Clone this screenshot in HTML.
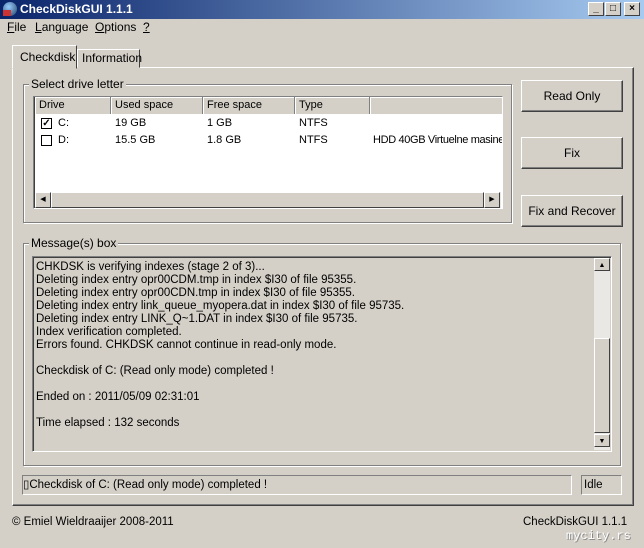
<!DOCTYPE html>
<html><head><style>
*{margin:0;padding:0;box-sizing:border-box}
body{width:644px;height:548px;background:#d4d0c8;font-family:"Liberation Sans",sans-serif;font-size:11px;color:#000;position:relative;overflow:hidden}
.a{position:absolute}
.title{left:0;top:0;width:644px;height:19px;background:linear-gradient(90deg,#0a246a,#a6caf0);color:#fff;font-weight:bold;font-size:12px;line-height:19px;padding-left:20px}
.wb{top:2px;width:16px;height:14px;background:#d4d0c8;border:1px solid;border-color:#fff #404040 #404040 #fff;font-size:10px;line-height:12px;text-align:center;color:#000;font-weight:bold}
.sunk{border:1px solid;border-color:#808080 #fff #fff #808080;box-shadow:inset 1px 1px #404040}
.grp{border:1px solid #808080;box-shadow:1px 1px #fff, inset 1px 1px #fff}
.lbl{background:#d4d0c8;padding:0 2px}
.btn{background:#d4d0c8;border:1px solid;border-color:#fff #404040 #404040 #fff;box-shadow:inset -1px -1px #808080;text-align:center;font-size:12px}
.hd{top:0;height:17px;border-right:1px solid #808080;box-shadow:inset 1px 1px #fff;padding-left:4px;line-height:16px}
.cb{width:11px;height:11px;border:1px solid #000;background:#fff;font-size:10px;line-height:9px;text-align:center;font-weight:bold}
.sb{width:16px;height:16px;background:#d4d0c8;border:1px solid;border-color:#fff #404040 #404040 #fff;font-size:7px;line-height:14px;text-align:center}
.msg div{height:13px;line-height:13px}
.m{top:20px;font-size:12px}
</style></head><body>
<div class="a title">CheckDiskGUI 1.1.1</div>
<div class="a" style="left:3px;top:2px;width:14px;height:14px;border-radius:50%;background:radial-gradient(circle at 40% 35%,#9cf,#246);"></div>
<div class="a" style="left:3px;top:10px;width:8px;height:6px;background:#c33"></div>
<div class="a wb" style="left:588px">_</div>
<div class="a wb" style="left:605px">□</div>
<div class="a wb" style="left:624px">×</div>
<div class="a m" style="left:7px"><u>F</u>ile</div>
<div class="a m" style="left:35px"><u>L</u>anguage</div>
<div class="a m" style="left:95px"><u>O</u>ptions</div>
<div class="a m" style="left:143px"><u>?</u></div>
<div class="a" style="left:12px;top:67px;width:622px;height:439px;border:1px solid;border-color:#fff #404040 #404040 #fff;box-shadow:inset -1px -1px #808080"></div>
<div class="a" style="left:77px;top:49px;width:63px;height:19px;border:1px solid;border-color:#fff #404040 #d4d0c8 #fff;padding:1px 0 0 4px;font-size:12px">Information</div>
<div class="a" style="left:12px;top:45px;width:65px;height:24px;background:#d4d0c8;border:1px solid;border-color:#fff #404040 #d4d0c8 #fff;padding:4px 0 0 7px;font-size:12px">Checkdisk</div>

<div class="a grp" style="left:23px;top:84px;width:489px;height:139px"></div>
<div class="a lbl" style="left:29px;top:77px;font-size:12px">Select drive letter</div>
<div class="a sunk" style="left:33px;top:96px;width:470px;height:113px;background:#fff;overflow:hidden">
 <div class="a hd" style="left:1px;width:76px;background:#d4d0c8">Drive</div>
 <div class="a hd" style="left:77px;width:92px;background:#d4d0c8">Used space</div>
 <div class="a hd" style="left:169px;width:92px;background:#d4d0c8">Free space</div>
 <div class="a hd" style="left:261px;width:75px;background:#d4d0c8">Type</div>
 <div class="a hd" style="left:336px;width:132px;background:#d4d0c8;border-right:none"></div>
 <div class="a cb" style="left:7px;top:21px">✓</div><div class="a" style="left:24px;top:20px">C:</div>
 <div class="a" style="left:81px;top:20px">19 GB</div><div class="a" style="left:173px;top:20px">1 GB</div><div class="a" style="left:265px;top:20px">NTFS</div>
 <div class="a cb" style="left:7px;top:38px"></div><div class="a" style="left:24px;top:37px">D:</div>
 <div class="a" style="left:81px;top:37px">15.5 GB</div><div class="a" style="left:173px;top:37px">1.8 GB</div><div class="a" style="left:265px;top:37px">NTFS</div><div class="a" style="left:339px;top:37px;white-space:nowrap;letter-spacing:-0.35px">HDD 40GB Virtuelne masine</div>
 <div class="a" style="left:1px;top:95px;width:466px;height:16px;background:#eae8e4"></div>
 <div class="a sb" style="left:1px;top:95px">◀</div>
 <div class="a" style="left:17px;top:95px;width:433px;height:16px;background:#d4d0c8;border:1px solid;border-color:#fff #404040 #404040 #fff"></div>
 <div class="a sb" style="left:450px;top:95px">▶</div>
</div>
<div class="a btn" style="left:521px;top:80px;width:102px;height:32px;line-height:30px">Read Only</div>
<div class="a btn" style="left:521px;top:137px;width:102px;height:32px;line-height:30px">Fix</div>
<div class="a btn" style="left:521px;top:195px;width:102px;height:32px;line-height:30px">Fix and Recover</div>

<div class="a grp" style="left:23px;top:243px;width:598px;height:223px"></div>
<div class="a lbl" style="left:29px;top:236px;font-size:12px">Message(s) box</div>
<div class="a sunk msg" style="left:32px;top:256px;width:580px;height:196px;padding:4px 0 0 3px;font-size:11.5px">
 <div>CHKDSK is verifying indexes (stage 2 of 3)...</div>
 <div>Deleting index entry opr00CDM.tmp in index $I30 of file 95355.</div>
 <div>Deleting index entry opr00CDN.tmp in index $I30 of file 95355.</div>
 <div>Deleting index entry link_queue_myopera.dat in index $I30 of file 95735.</div>
 <div>Deleting index entry LINK_Q~1.DAT in index $I30 of file 95735.</div>
 <div>Index verification completed.</div>
 <div>Errors found. CHKDSK cannot continue in read-only mode.</div>
 <div></div>
 <div>Checkdisk of C: (Read only mode) completed !</div>
 <div></div>
 <div>Ended on : 2011/05/09 02:31:01</div>
 <div></div>
 <div>Time elapsed : 132 seconds</div>
 <div class="a" style="left:561px;top:1px;width:16px;height:192px;background:#eae8e4"></div>
 <div class="a sb" style="left:561px;top:1px">▲</div>
 <div class="a" style="left:561px;top:81px;width:16px;height:95px;background:#d4d0c8;border:1px solid;border-color:#fff #404040 #404040 #fff"></div>
 <div class="a sb" style="left:561px;top:177px">▼</div>
</div>
<div class="a" style="left:22px;top:475px;width:550px;height:20px;border:1px solid;border-color:#808080 #fff #fff #808080;line-height:18px;font-size:11.5px">▯Checkdisk of C: (Read only mode) completed !</div>
<div class="a" style="left:581px;top:475px;width:41px;height:20px;border:1px solid;border-color:#808080 #fff #fff #808080;line-height:18px;padding-left:2px;font-size:11.5px">Idle</div>
<div class="a" style="left:12px;top:516px;font-size:11.5px">© Emiel Wieldraaijer 2008-2011</div>
<div class="a" style="left:523px;top:516px;font-size:11.5px">CheckDiskGUI 1.1.1</div>
<div class="a" style="left:566px;top:529px;font-size:12px;color:#fff;font-family:'Liberation Mono',monospace;text-shadow:1px 1px #888">mycity.rs</div>
</body></html>
